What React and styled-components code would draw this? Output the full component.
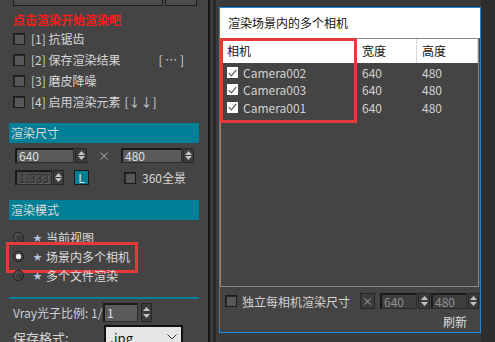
import React from 'react';
import styled, { createGlobalStyle } from 'styled-components';

const TEAL = '#007f96';

const GlobalStyle = createGlobalStyle`
  html, body {
    margin: 0;
    padding: 0;
    background: #3a3a3a;
  }
  body {
    font-family: "Noto Sans CJK SC", "Noto Sans", sans-serif;
    font-size: 12px;
  }
  * {
    box-sizing: border-box;
  }
`;

const Page = styled.div`
  display: flex;
  width: 495px;
  height: 342px;
  overflow: hidden;
`;

/* ---------- left panel ---------- */

const LeftPanel = styled.div`
  width: 208px;
  flex-shrink: 0;
  background: #444;
  padding-left: 9px;
  display: flex;
  flex-direction: column;
  overflow: hidden;
  color: #d6d6d6;
  line-height: 1;

  & > * {
    flex-shrink: 0;
  }
`;

const ToolRow = styled.div`
  height: 6px;
  display: flex;
  align-items: flex-end;
  gap: 2px;
  padding-left: 4px;
  overflow: hidden;
`;

const ToolButton = styled.div`
  width: ${p => p.w}px;
  height: 20px;
  flex-shrink: 0;
  background: #4b4b4b;
  border: 1px solid #1f1f1f;
`;

const Hint = styled.div`
  color: #ff1a1a;
  font-weight: bold;
  height: 16px;
  line-height: 16px;
  margin: 6px 0 0 4px;
`;

const CheckRow = styled.div`
  height: 21px;
  display: flex;
  align-items: center;
  margin-left: 4px;
  gap: 6px;
`;

const DarkBox = styled.span`
  width: 12px;
  height: 12px;
  flex-shrink: 0;
  background: #575757;
  border: 1px solid #1c1c1c;
  box-shadow: inset 1px 1px 0 #2a2a2a;
`;

const Tag = styled.span`
  margin-left: ${p => p.gap || 0}px;
  color: #cfd4dc;
`;

const SectionHeader = styled.div`
  width: 190px;
  height: 20px;
  line-height: 20px;
  margin-top: ${p => p.top}px;
  padding-left: 2px;
  background: ${TEAL};
  color: #dcdcdc;
  font-size: 12px;
`;

const SpinRow = styled.div`
  display: flex;
  align-items: center;
  margin-top: ${p => p.top}px;
  padding-left: 6px;
`;

const NumInput = styled.div`
  width: ${p => p.w}px;
  height: ${p => p.h || 15}px;
  flex-shrink: 0;
  background: ${p => (p.disabled ? '#4a4a4a' : '#5a5a5a')};
  border-top: 2px solid #1a1a1a;
  border-left: 2px solid #1a1a1a;
  border-bottom: 1px solid #2b2b2b;
  border-right: 1px solid #2b2b2b;
  color: ${p => (p.disabled ? '#2a2a2a' : '#e0e0e0')};
  text-shadow: ${p => (p.disabled ? '1px 1px 0 #666' : 'none')};
  padding-left: 2px;
  display: flex;
  align-items: center;
  font-size: 12px;
`;

const Arrows = styled.div`
  width: ${p => p.w || 11}px;
  height: ${p => p.h || 15}px;
  flex-shrink: 0;
  margin-left: ${p => p.gap || 1}px;
  background: #3c3c3c;
  border: 1px solid #262626;
  display: flex;
  flex-direction: column;
  align-items: center;
  justify-content: space-evenly;
`;

const Times = styled.span`
  width: ${p => p.w}px;
  text-align: center;
  color: #9a9a9a;
  font-size: 12px;
`;

const LButton = styled.div`
  width: 15px;
  height: 15px;
  margin-left: 10px;
  background: ${TEAL};
  border: 1px solid #1a1a1a;
  color: #e6e6e6;
  display: flex;
  align-items: center;
  justify-content: center;
  font-size: 12px;
`;

const PanoCheck = styled.div`
  display: flex;
  align-items: center;
  gap: 6px;
  margin-left: 35px;
`;

const RadioList = styled.div`
  margin-top: 8px;
  display: flex;
  flex-direction: column;
`;

const RadioRow = styled.div`
  position: relative;
  height: 19px;
  display: flex;
  align-items: center;
  margin-left: 4px;

  &::after {
    content: '';
    display: ${p => (p.highlight ? 'block' : 'none')};
    position: absolute;
    left: -7px;
    top: -5px;
    width: 126px;
    height: 25px;
    border: 3px solid #e8393b;
  }
`;

const Radio = styled.span`
  width: 11px;
  height: 11px;
  border-radius: 50%;
  flex-shrink: 0;
  background: ${p =>
    p.checked
      ? 'radial-gradient(circle, #f2f2f2 0 2.5px, #3a3a3a 3px, #555 5px)'
      : 'radial-gradient(circle at 60% 60%, #3a3a3a 0 2px, #555 5px)'};
  border: 1px solid #1c1c1c;
`;

const Star = styled.span`
  margin-left: 9px;
  color: #b4c2de;
  font-size: 9px;
`;

const RadioText = styled.span`
  margin-left: 4px;
  color: #dcdcdc;
`;

const TealLine = styled.div`
  width: 190px;
  height: 2px;
  margin-top: 12px;
  background: ${TEAL};
`;

const VrayRow = styled.div`
  display: flex;
  align-items: center;
  margin: 4px 0 0 4px;
  color: #cdd2db;
`;

const VrayLabel = styled.span`
  width: 90px;
`;

const SaveRow = styled.div`
  display: flex;
  margin: 3px 0 0 4px;
`;

const SaveLabel = styled.span`
  width: 91px;
  padding-top: 6px;
  font-size: 13px;
`;

const Dropdown = styled.div`
  width: 79px;
  height: 22px;
  background: #e6e6e6;
  border: 2px solid #111;
  color: #111;
  display: flex;
  align-items: center;
  justify-content: space-between;
  padding: 2px 4px 0 4px;
  font-size: 13px;
`;

/* ---------- separator ---------- */

const Splitter = styled.div`
  width: 11px;
  flex-shrink: 0;
  background: linear-gradient(
    to right,
    #151515 0 2px,
    #3b3b3b 2px 5px,
    #2a2a2a 5px 8px,
    #3c3c3c 8px 11px
  );
`;

/* ---------- right side ---------- */

const RightArea = styled.div`
  flex: 1;
  display: flex;
  background: #3a3a3a;
`;

const DialogColumn = styled.div`
  width: 262px;
  flex-shrink: 0;
  padding-top: 7px;
`;

const Gutter = styled.div`
  flex: 1;
  background: #2e2e2e;
`;

const Dialog = styled.div`
  height: 326px;
  border: 1px solid #2386dc;
  background: #444;
  display: flex;
  flex-direction: column;
  color: #d2d2d2;
`;

const TitleBar = styled.div`
  height: 30px;
  line-height: 30px;
  background: #fff;
  color: #111;
  padding-left: 8px;
`;

const ListBox = styled.div`
  position: relative;
  height: 249px;
  margin-right: 1px;
  border: 1px solid #8a8a8a;
`;

const HeaderRow = styled.div`
  display: flex;
  height: 24px;
  background: #fff;
  color: #111;
`;

const HeadCell = styled.div`
  width: ${p => (p.w ? `${p.w}px` : 'auto')};
  flex: ${p => (p.w ? 'none' : 1)};
  padding-left: ${p => p.pad}px;
  line-height: 24px;
  border-right: 1px solid #d6d6d6;
`;

const Rows = styled.div`
  padding-top: 1px;
`;

const CameraRow = styled.div`
  display: flex;
  height: 17.3px;
  align-items: center;
`;

const Cell = styled.div`
  width: ${p => p.w}px;
  flex-shrink: 0;
  padding-left: ${p => p.pad}px;
  display: flex;
  align-items: center;
  gap: 5px;
`;

const WhiteBox = styled.span`
  width: 11px;
  height: 11px;
  background: #fff;
  display: flex;
  align-items: center;
  justify-content: center;
`;

const ColumnMark = styled.div`
  position: absolute;
  left: -1px;
  top: -1px;
  width: 137px;
  height: 85px;
  border: 3px solid #e8393b;
`;

const BottomRow = styled.div`
  display: flex;
  align-items: center;
  height: 16px;
  margin-top: 6px;
  padding: 0 1px 0 5px;
`;

const BottomLabel = styled.span`
  margin-left: 5px;
  flex: 1;
`;

const CloseButton = styled.div`
  width: 15px;
  height: 16px;
  margin-right: 5px;
  background: #3c3c3c;
  border: 1px solid #262626;
  color: #a0a0a0;
  display: flex;
  align-items: center;
  justify-content: center;
  font-size: 11px;
`;

const DimInput = styled(NumInput)`
  background: #3e3e3e;
  color: #8e8e8e;
  text-shadow: none;
  height: 16px;
  margin-left: ${p => p.gap || 0}px;
`;

const Refresh = styled.div`
  align-self: flex-end;
  margin: 6px 13px 0 0;
  line-height: 14px;
  color: #dedede;
`;

const Triangle = ({ down }) => (
  <svg width="7" height="4" viewBox="0 0 7 4">
    <path d={down ? 'M0 0h7L3.5 4z' : 'M0 4h7L3.5 0z'} fill="#c4c4c4" />
  </svg>
);

const Spinner = ({ w, h, gap }) => (
  <Arrows w={w} h={h} gap={gap}>
    <Triangle />
    <Triangle down />
  </Arrows>
);

const Tick = () => (
  <svg width="9" height="8" viewBox="0 0 9 8">
    <path d="M0.8 4.2l2.6 2.6L8.3 0.9" stroke="#5c5c5c" strokeWidth="1.2" fill="none" />
  </svg>
);

const Chevron = () => (
  <svg width="10" height="6" viewBox="0 0 10 6">
    <path d="M0.5 0.5l4.5 4.5 4.5-4.5" stroke="#333" strokeWidth="1" fill="none" />
  </svg>
);

const options = [
  { key: '[1]', text: '抗锯齿' },
  { key: '[2]', text: '保存渲染结果', extra: '[ … ]', gap: 38 },
  { key: '[3]', text: '磨皮降噪' },
  { key: '[4]', text: '启用渲染元素', extra: '[↓↓]', gap: 4 },
];

const modes = ['当前视图', '场景内多个相机', '多个文件渲染'];

const cameras = ['Camera002', 'Camera003', 'Camera001'];

export default function App() {
  return (
    <Page>
      <GlobalStyle />
      <LeftPanel>
        <ToolRow>
          <ToolButton w={150} />
          <ToolButton w={32} />
        </ToolRow>
        <Hint>点击渲染开始渲染吧</Hint>
        {options.map(o => (
          <CheckRow key={o.key}>
            <DarkBox />
            <span>
              <Tag>{o.key}</Tag> {o.text}
              {o.extra && <Tag gap={o.gap}>{o.extra}</Tag>}
            </span>
          </CheckRow>
        ))}

        <SectionHeader top={11}>渲染尺寸</SectionHeader>
        <SpinRow top={5}>
          <NumInput w={59}>640</NumInput>
          <Spinner w={12} />
          <Times w={34}>×</Times>
          <NumInput w={61}>480</NumInput>
          <Spinner />
        </SpinRow>
        <SpinRow top={7}>
          <NumInput w={37} disabled>
            1.333
          </NumInput>
          <Spinner />
          <LButton>L</LButton>
          <PanoCheck>
            <DarkBox />
            <span>360全景</span>
          </PanoCheck>
        </SpinRow>

        <SectionHeader top={15}>渲染模式</SectionHeader>
        <RadioList>
          {modes.map((m, i) => (
            <RadioRow key={m} highlight={i === 1}>
              <Radio checked={i === 1} />
              <Star>★</Star>
              <RadioText>{m}</RadioText>
            </RadioRow>
          ))}
        </RadioList>

        <TealLine />
        <VrayRow>
          <VrayLabel>Vray光子比例: 1/</VrayLabel>
          <NumInput w={35} h={19}>
            1
          </NumInput>
          <Spinner h={19} gap={3} />
        </VrayRow>
        <SaveRow>
          <SaveLabel>保存格式:</SaveLabel>
          <Dropdown>
            <span>.jpg</span>
            <Chevron />
          </Dropdown>
        </SaveRow>
      </LeftPanel>

      <Splitter />

      <RightArea>
        <DialogColumn>
          <Dialog>
            <TitleBar>渲染场景内的多个相机</TitleBar>
            <ListBox>
              <HeaderRow>
                <HeadCell w={136} pad={6}>
                  相机
                </HeadCell>
                <HeadCell w={60} pad={5}>
                  宽度
                </HeadCell>
                <HeadCell pad={5}>高度</HeadCell>
              </HeaderRow>
              <Rows>
                {cameras.map(c => (
                  <CameraRow key={c}>
                    <Cell w={136} pad={6}>
                      <WhiteBox>
                        <Tick />
                      </WhiteBox>
                      {c}
                    </Cell>
                    <Cell w={60} pad={5}>
                      640
                    </Cell>
                    <Cell w={60} pad={5}>
                      480
                    </Cell>
                  </CameraRow>
                ))}
              </Rows>
              <ColumnMark />
            </ListBox>
            <BottomRow>
              <DarkBox />
              <BottomLabel>独立每相机渲染尺寸</BottomLabel>
              <CloseButton>×</CloseButton>
              <DimInput w={37}>640</DimInput>
              <Spinner w={12} h={16} />
              <DimInput w={36} gap={1}>
                480
              </DimInput>
              <Spinner h={16} />
            </BottomRow>
            <Refresh>刷新</Refresh>
          </Dialog>
        </DialogColumn>
        <Gutter />
      </RightArea>
    </Page>
  );
}
